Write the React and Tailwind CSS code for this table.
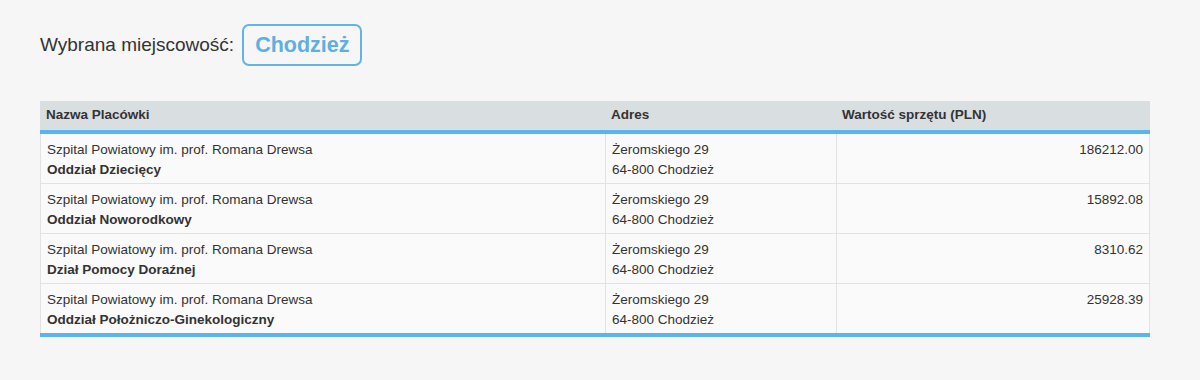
import React from "react";

const rows = [
  { name: "Oddział Dziecięcy", value: "186212.00" },
  { name: "Oddział Noworodkowy", value: "15892.08" },
  { name: "Dział Pomocy Doraźnej", value: "8310.62" },
  { name: "Oddział Położniczo-Ginekologiczny", value: "25928.39" },
];

export default function App() {
  return (
    <div className="min-h-[380px] w-[1200px] bg-[#f6f6f6] px-[40px] pt-[24px] text-[#333]" style={{ fontFamily: '"Liberation Sans", Arial, sans-serif' }}>
      <div className="flex items-center gap-[8px]">
        <span className="text-[19px] text-[#333]">Wybrana miejscowość:</span>
        <span className="flex h-[42px] items-center rounded-[7px] border-2 border-[#62b4e3] px-[11px] text-[21.5px] font-bold text-[#5eb0e0]">Chodzież</span>
      </div>
      <div className="mt-[35px] w-[1110px] border-b-4 border-[#5ab5ec]">
        <div className="grid grid-cols-[565px_231px_314px] border-b-4 border-[#5ab5ec] bg-[#d9dee1] text-[13.5px] font-bold text-[#333]">
          <div className="flex h-[29px] items-center px-[6px]">Nazwa Placówki</div>
          <div className="flex h-[29px] items-center px-[6px]">Adres</div>
          <div className="flex h-[29px] items-center px-[6px]">Wartość sprzętu (PLN)</div>
        </div>
        {rows.map((r, i) => (
          <div
            key={i}
            className={`grid grid-cols-[564px_231px_313px] border-x border-[#e2e2e2] bg-[#fafafa] text-[13.5px] leading-[20px] text-[#333] ${i < rows.length - 1 ? "border-b" : ""}`}
          >
            <div className="h-[49px] px-[6px] pt-[6px]">
              <div>Szpital Powiatowy im. prof. Romana Drewsa</div>
              <div className="font-bold">{r.name}</div>
            </div>
            <div className="h-[49px] border-l border-[#e2e2e2] px-[6px] pt-[6px]">
              <div>Żeromskiego 29</div>
              <div>64-800 Chodzież</div>
            </div>
            <div className="h-[49px] border-l border-[#e2e2e2] px-[6px] pt-[6px] text-right">{r.value}</div>
          </div>
        ))}
      </div>
    </div>
  );
}
